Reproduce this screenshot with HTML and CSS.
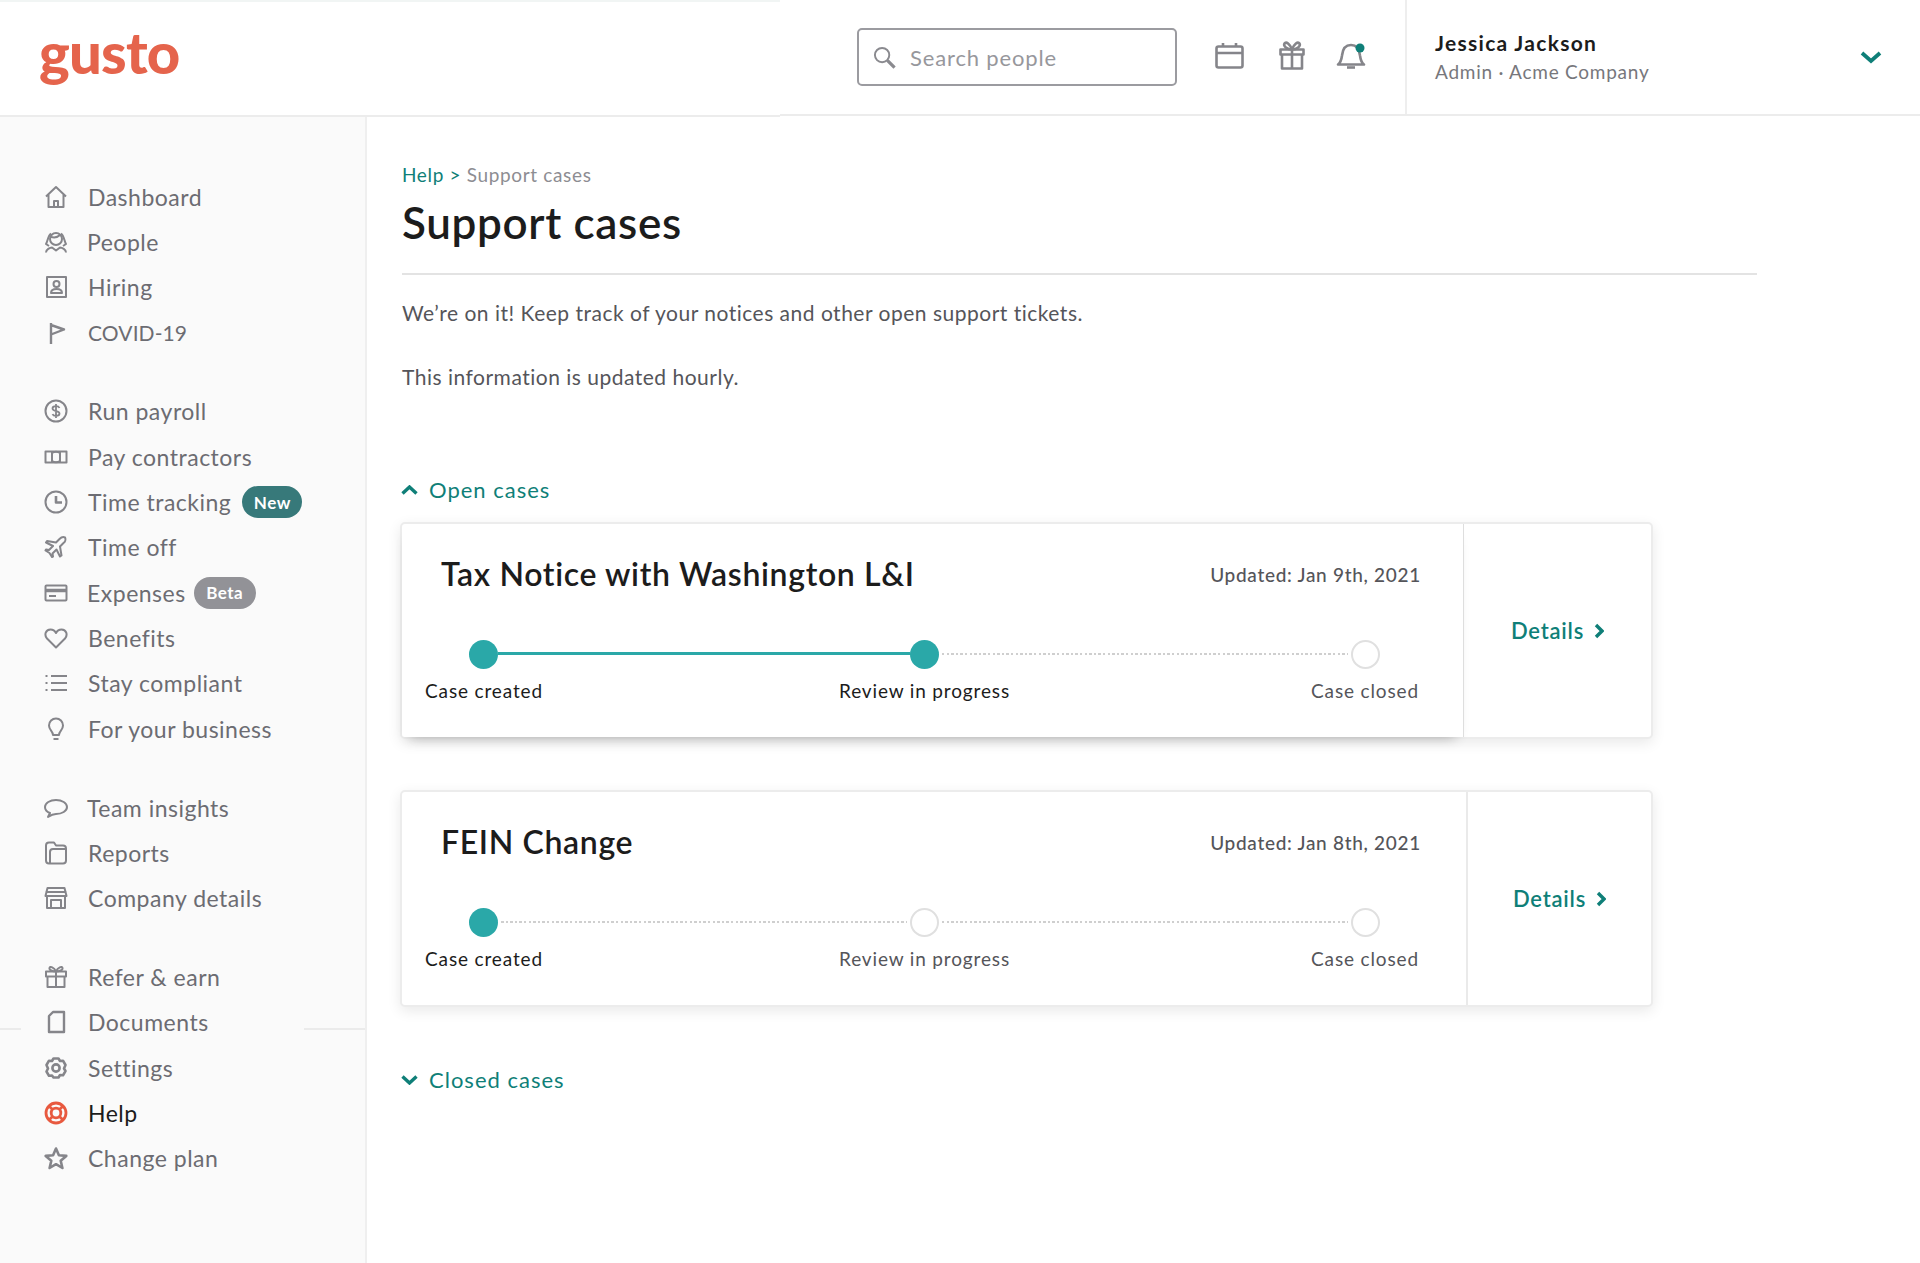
FILE: index.html
```html
<!DOCTYPE html>
<html lang="en">
<head>
<meta charset="utf-8">
<title>Support cases</title>
<link rel="stylesheet" href="styles.css">
</head>
<body>
<header class="topbar">
  <div class="brand"><span class="logo">gusto</span></div>
  <div class="tools">
    <div class="search">
      <svg class="ico search-ico" viewBox="0 0 24 24"><circle cx="9.500" cy="9.500" r="7.500"/><path d="M15 15l7.500 7.500" stroke-width="3.400"/></svg>
      <span>Search people</span>
    </div>
    <div class="tool-icons">
      <svg class="ico tool-cal" viewBox="0 0 29 27"><rect x="1.500" y="4.500" width="26" height="21" rx="2"/><path d="M1.500 11h26M8 1v4M21 1v4"/></svg>
      <svg class="ico tool-gift" viewBox="0 0 26 29"><rect x="1.500" y="8.500" width="23" height="5"/><path d="M3 13.500V27.500h20V13.500M13 8.500v19M13 8.500C11 3 7 0 5.500 2.500S8 8.500 13 8.500c5 0 9-3.500 7.500-6S15 3 13 8.500"/></svg>
      <svg class="ico tool-bell" viewBox="0 0 30 27"><path d="M2 22.500c3-2 3.500-5 4-9 .6-6 3.500-10.500 9-10.500s8.400 4.500 9 10.500c.5 4 1 7 4 9z"/><path d="M11 25.500h8" stroke-width="2.600"/><circle class="bell-dot" cx="24" cy="6" r="4.500"/></svg>
    </div>
    <div class="account">
      <div class="account-text">
        <div class="account-name">Jessica Jackson</div>
        <div class="account-role">Admin · Acme Company</div>
      </div>
      <svg class="chev chev-account" viewBox="0 0 22 14"><path d="M2 3l9 8 9-8"/></svg>
    </div>
  </div>
</header>
<div class="layout">
  <nav class="sidebar">
    <ul class="nav-group">
      <li class="nav-item"><svg class="ico" viewBox="0 0 24 24"><path d="M2 11.500L12 2l10 9.500M4.500 9v13h15V9M10 22v-6h4v6"/></svg><span>Dashboard</span></li>
      <li class="nav-item nudge"><svg class="ico" viewBox="0 0 24 24"><circle cx="12" cy="9" r="6"/><path d="M7 3.500c-3 2-3 7-5 10.500l3 2M17 3.500c3 2 3 7 5 10.500l-3 2M7 7c4 1 7 0 9-2M2 22.500c0-3 4-5 6-5l4 3 4-3c2 0 6 2 6 5"/></svg><span>People</span></li>
      <li class="nav-item"><svg class="ico" viewBox="0 0 24 24"><rect x="3" y="2" width="19" height="20"/><circle cx="12.500" cy="9" r="3"/><path d="M7 18c0-3 3-4 5.500-4s5.500 1 5.500 4z"/></svg><span>Hiring</span></li>
      <li class="nav-item nav-caps"><svg class="ico" viewBox="0 0 24 24"><path d="M7 2v21M7 4l13 4.500-13 5" stroke-width="2.400"/></svg><span>COVID-19</span></li>
    </ul>
    <ul class="nav-group">
      <li class="nav-item"><svg class="ico" viewBox="0 0 24 24"><circle cx="12" cy="12" r="10.500"/><path d="M15.500 9c-.5-1.200-1.800-1.800-3.500-1.800-2 0-3.500 1-3.500 2.400 0 3.300 7 1.700 7 5 0 1.300-1.500 2.300-3.500 2.300-1.700 0-3-.6-3.500-1.800M12 5v14" stroke-width="1.800"/></svg><span>Run payroll</span></li>
      <li class="nav-item"><svg class="ico" viewBox="0 0 24 24"><rect x="1.500" y="6.500" width="21" height="11"/><path d="M8 6.500v11M16 6.500v11M8 8c3-2 5-2 8 0M8 16c3 2 5 2 8 0"/></svg><span>Pay contractors</span></li>
      <li class="nav-item"><svg class="ico" viewBox="0 0 24 24"><circle cx="12" cy="12" r="10.500"/><path d="M12 6v6.500h6" stroke-width="2.600"/></svg><span>Time tracking</span><span class="badge badge-new">New</span></li>
      <li class="nav-item"><svg class="ico" viewBox="0 0 24 24"><path d="M21 2.500c-2-1-4 0-5.500 1.500L12 7.500 3 6 2 7.500l7 3.500-4 4-3-.5-.5 1 4 2.500 2.500 4 1-.5-.5-3 4-4 3.500 7 1.500-1-1.500-9 3.500-3.500C21 7 22 4.500 21 2.500z"/></svg><span>Time off</span></li>
      <li class="nav-item nudge"><svg class="ico" viewBox="0 0 24 24"><rect x="1.500" y="4.500" width="21" height="15" rx="1"/><path d="M1.500 9.500h21" stroke-width="3.500"/><path d="M5 15h7"/></svg><span>Expenses</span><span class="badge badge-beta">Beta</span></li>
      <li class="nav-item"><svg class="ico" viewBox="0 0 24 24"><path d="M12 21.500L3 12.500C0 9 1.500 3.500 6.500 3.500c2.500 0 4.500 1.500 5.500 3.500 1-2 3-3.500 5.500-3.500 5 0 6.500 5.500 3.500 9z"/></svg><span>Benefits</span></li>
      <li class="nav-item"><svg class="ico" viewBox="0 0 24 24"><path d="M7 5h16M7 12h16M7 19h16M1.500 5h2M1.500 12h2M1.500 19h2"/></svg><span>Stay compliant</span></li>
      <li class="nav-item"><svg class="ico" viewBox="0 0 24 24"><path d="M9 18c0-4-4-5-4-9.500a7 7 0 0 1 14 0C19 13 15 14 15 18zM9.500 22h5"/></svg><span>For your business</span></li>
    </ul>
    <ul class="nav-group">
      <li class="nav-item nudge"><svg class="ico" viewBox="0 0 24 24"><path d="M4 21l2-4c-3-1-5-3-5-6 0-4 5-7 11-7s11 3 11 7-5 7-11 7c-2 0-5 1-8 3z"/></svg><span>Team insights</span></li>
      <li class="nav-item"><svg class="ico" viewBox="0 0 24 24"><path d="M5 22.500c-2 0-3-1-3-3v-15c0-2 1-3 3-3h5l2 3h7c2 0 3 1 3 3v12c0 2-1 3-3 3zM6 22.500V11c0-2 1-3 3-3h13"/></svg><span>Reports</span></li>
      <li class="nav-item"><svg class="ico" viewBox="0 0 24 24"><path d="M3 10v12h18V10M1.500 10l2-8h17l2 8zM7 22v-8h10v8M1.500 6h21"/></svg><span>Company details</span></li>
    </ul>
    <ul class="nav-group">
      <li class="nav-item"><svg class="ico" viewBox="0 0 24 24"><rect x="2" y="6.500" width="20" height="5"/><path d="M3.500 11.500V22h17V11.500M12 6.500V22M12 6.500C10 2 6 1 5.500 3s3 3.500 6.500 3.500 7-1.500 6.500-3.500-4.500-1-6.500 3.500"/></svg><span>Refer &amp; earn</span></li>
      <li class="nav-item"><svg class="ico" viewBox="0 0 24 24"><path d="M9 2h11v20H5V6z" stroke-width="2.400"/></svg><span>Documents</span></li>
      <li class="nav-item"><svg class="ico ico-gear" viewBox="0 0 24 24"><path d="M9.500 2.500h5l1.500 2.500 3-.3 2.500 4.300-1.500 3.500 1.500 2.500-2.500 4.300-3-.3-1.500 2.500h-5L8 19.500l-3 .3L2.500 15.500 4 12.500 2.500 9 5 4.700l3 .3z"/><circle cx="12" cy="12" r="3.600"/></svg><span>Settings</span></li>
      <li class="nav-item nav-item-active"><svg class="ico ico-help" viewBox="0 0 24 24"><circle cx="12" cy="12" r="10"/><circle cx="12" cy="12" r="4.800"/><path d="M5 5l3.500 3.500M19 5l-3.500 3.500M5 19l3.500-3.500M19 19l-3.500-3.500"/></svg><span>Help</span></li>
      <li class="nav-item"><svg class="ico ico-star" viewBox="0 0 24 24"><path d="M12 2.500l2.900 6.700 7.400.7-5.600 4.900 1.700 7.200-6.400-3.800-6.400 3.800 1.700-7.200-5.600-4.900 7.400-.7z"/></svg><span>Change plan</span></li>
    </ul>
  </nav>
  <main class="content">
    <div class="crumbs"><a class="crumb-link">Help &gt;</a> <span>Support cases</span></div>
    <h1 class="page-title">Support cases</h1>
    <p class="lead">We’re on it! Keep track of your notices and other open support tickets.</p>
    <p class="lead lead-second">This information is updated hourly.</p>

    <div class="section-toggle section-open"><svg class="chev" viewBox="0 0 17 10"><path d="M1.500 8.500L8.500 2l7 6.500"/></svg><span>Open cases</span></div>

    <article class="case case-shadowed">
      <div class="case-main">
        <div class="case-body">
          <div class="case-head"><h2 class="case-title">Tax Notice with Washington L&amp;I</h2><div class="case-date">Updated: Jan 9th, 2021</div></div>
          <div class="track"><i class="dot dot-on"></i><i class="link link-on"></i><i class="dot dot-on"></i><i class="link"></i><i class="dot"></i></div>
          <div class="labels"><span class="label label-on">Case created</span><span class="label label-on">Review in progress</span><span class="label">Case closed</span></div>
        </div>
      </div>
      <div class="case-side"><a class="details">Details<svg class="chev chev-details" viewBox="0 0 10 16"><path d="M2 2l6 6-6 6"/></svg></a></div>
    </article>

    <article class="case case-second">
      <div class="case-main">
        <div class="case-body">
          <div class="case-head"><h2 class="case-title">FEIN Change</h2><div class="case-date">Updated: Jan 8th, 2021</div></div>
          <div class="track"><i class="dot dot-on"></i><i class="link"></i><i class="dot"></i><i class="link"></i><i class="dot"></i></div>
          <div class="labels"><span class="label label-on">Case created</span><span class="label">Review in progress</span><span class="label">Case closed</span></div>
        </div>
      </div>
      <div class="case-side"><a class="details">Details<svg class="chev chev-details" viewBox="0 0 10 16"><path d="M2 2l6 6-6 6"/></svg></a></div>
    </article>

    <div class="section-toggle section-closed"><svg class="chev" viewBox="0 0 17 10"><path d="M1.500 1.500l7 6.500 7-6.500"/></svg><span>Closed cases</span></div>
  </main>
</div>
</body>
</html>
```
FILE: styles.css
```css
* { box-sizing: border-box; }
html, body { margin: 0; padding: 0; }
body {
  height: 1263px;
  overflow: hidden;
  display: flex;
  flex-direction: column;
  background: #fff;
  color: #1c1c1c;
  font-family: "Lato", "Noto Sans", sans-serif;
  font-size: 21px;
}
ul { list-style: none; margin: 0; padding: 0; }
h1, h2, p { margin: 0; font-weight: 500; }

.ico { width: 24px; height: 24px; flex: none; fill: none; stroke: #85858a; stroke-width: 2; stroke-linejoin: round; }
.ico-gear, .ico-star { stroke-width: 2.600; }
.ico-help { stroke: #e8593f; stroke-width: 2.800; }
.chev { fill: none; stroke: #0f7f78; stroke-width: 3.400; stroke-linecap: butt; stroke-linejoin: miter; flex: none; }

/* Top bar */
.topbar { display: flex; align-items: flex-start; flex: none; height: 117px; }
.brand {
  width: 780px;
  flex: none;
  height: 117px;
  padding: 18px 0 0 39px;
  border-top: 2px solid #f1f5f4;
  border-bottom: 2px solid #ececec;
}
.logo {
  display: block;
  color: #e5644c;
  font-size: 58px;
  line-height: 64px;
  font-weight: 900;
  letter-spacing: -.8px;
}
.tools {
  flex: 1;
  min-width: 0;
  height: 116px;
  display: flex;
  align-items: center;
  border-bottom: 2px solid #ececec;
  padding-left: 77px;
}
.search {
  width: 320px;
  height: 58px;
  flex: none;
  display: flex;
  align-items: center;
  gap: 14px;
  padding-left: 14px;
  border: 2px solid #9b9ba0;
  border-radius: 5px;
  color: #97979c;
  font-size: 22px;
  letter-spacing: .85px;
}
.search-ico { width: 23px; height: 23px; stroke: #8a8a8f; }
.tool-icons { display: flex; align-items: center; flex: none; width: 228px; padding-bottom: 3px; }
.tool-icons .ico { stroke-width: 2.600; }
.tool-cal { width: 29px; height: 27px; margin-left: 38px; }
.tool-gift { width: 26px; height: 29px; margin-left: 35px; }
.tool-bell { width: 30px; height: 27px; margin-left: 31px; }
.bell-dot { fill: #0f7f78; stroke: none; }
.account {
  flex: 1;
  align-self: stretch;
  display: flex;
  align-items: center;
  justify-content: space-between;
  border-left: 2px solid #eeeeee;
  padding: 0 38px 0 28px;
}
.account-name { font-size: 21px; line-height: 28px; font-weight: 700; letter-spacing: 1.3px; }
.account-role { font-size: 19px; line-height: 26px; color: #77777c; letter-spacing: .75px; margin-top: 2px; }
.chev-account { width: 22px; height: 14px; stroke-width: 3.800; }

/* Layout */
.layout { flex: 1; display: flex; min-height: 0; }
.sidebar {
  width: 367px;
  flex: none;
  padding-top: 57px;
  background-color: #fafafa;
  background-image: linear-gradient(#ebebeb, #ebebeb), linear-gradient(#ebebeb, #ebebeb);
  background-repeat: no-repeat;
  background-size: 21px 2px, 61px 2px;
  background-position: left 0 top 911px, right 0 top 911px;
  border-right: 2px solid #efefef;
}
.nav-group + .nav-group { margin-top: 33.500px; }
.nav-item {
  height: 45.330px;
  display: flex;
  align-items: center;
  padding-left: 44px;
  color: #6c6c72;
  font-size: 23px;
  letter-spacing: .5px;
}
.nav-item > span:first-of-type { margin-left: 20px; }
.nudge > span:first-of-type { margin-left: 19px; }
.nav-caps { font-size: 21px; letter-spacing: .1px; }
.nav-item-active { color: #1c1c1c; }
.badge {
  height: 32px;
  border-radius: 16px;
  display: inline-flex;
  align-items: center;
  justify-content: center;
  margin-left: 11px;
  color: #fff;
  font-size: 17px;
  font-weight: 700;
  letter-spacing: .5px;
}
.badge-new { width: 60px; background: #37797a; }
.badge-beta { width: 62px; margin-left: 8px; background: #929297; }

/* Content */
.content { flex: 1; min-width: 0; padding: 46px 0 0 35px; }
.crumbs { font-size: 19px; line-height: 24px; color: #8d8d92; letter-spacing: .65px; }
.crumb-link { color: #0f7f78; }
.page-title {
  margin-top: 10px;
  width: 1355px;
  padding-bottom: 26px;
  border-bottom: 2px solid #e3e3e3;
  font-size: 44px;
  line-height: 50px;
  font-weight: 600;
  letter-spacing: .65px;
}
.lead { margin-top: 23px; line-height: 30px; color: #55555a; font-weight: 400; letter-spacing: .5px; }
.lead-second { margin-top: 34px; }

.section-toggle {
  display: flex;
  align-items: center;
  gap: 11px;
  line-height: 24px;
  color: #0f7f78;
  font-size: 22px;
  letter-spacing: 1px;
}
.section-toggle .chev { width: 17px; height: 10px; margin-left: -1px; }
.section-open { margin-top: 86px; }
.section-closed { margin-top: 61px; }

.case {
  width: 1253px;
  height: 217px;
  margin-left: -2px;
  display: flex;
  border: 2px solid #ececec;
  border-radius: 5px;
  box-shadow: 0 4px 14px rgba(0,0,0,.09);
  background: #fff;
}
.case-shadowed { margin-top: 20px; }
.case-second { margin-top: 51px; }
.case-main { flex: 1; min-width: 0; }
.case-shadowed .case-main { box-shadow: 0 8px 12px -8px rgba(0,0,0,.3); }
.case-body { width: 1061px; padding-top: 30px; }
.case-head { display: flex; align-items: center; justify-content: space-between; height: 40px; padding: 0 42px 0 39px; }
.case-title { font-size: 32px; line-height: 40px; font-weight: 600; letter-spacing: .65px; }
.case-date { font-size: 19px; font-weight: 500; color: #55555a; letter-spacing: .7px; }
.track { display: flex; align-items: center; height: 29px; margin: 46px 83px 0 67px; }
.dot { width: 29px; height: 29px; flex: none; border-radius: 50%; border: 2px solid #e0e0e0; background: #fff; }
.dot-on { border: 0; background: #2aa8a8; }
.link {
  flex: 1;
  height: 2px;
  margin-top: -2px;
  padding: 0 3px;
  background: repeating-linear-gradient(90deg, #cfcfcf 0 2.500px, transparent 2.500px 4.600px) content-box;
}
.link-on { height: 3px; background: #2aa8a8; }
.labels { display: flex; justify-content: space-between; margin: 10px 33px 0 17px; }
.label { width: 130px; white-space: nowrap; display: flex; justify-content: center; font-size: 19px; line-height: 24px; color: #55555a; letter-spacing: .85px; }
.label-on { color: #1c1c1c; }
.case-side { width: 188px; flex: none; display: flex; align-items: center; justify-content: center; border-left: 1px solid #dedede; }
.case-second .case-side { width: 185px; border-left: 2px solid #eaeaea; }
.details { display: flex; align-items: center; gap: 10px; color: #0f7f78; font-size: 22px; font-weight: 600; letter-spacing: .8px; }
.chev-details { width: 10px; height: 16px; }
```
